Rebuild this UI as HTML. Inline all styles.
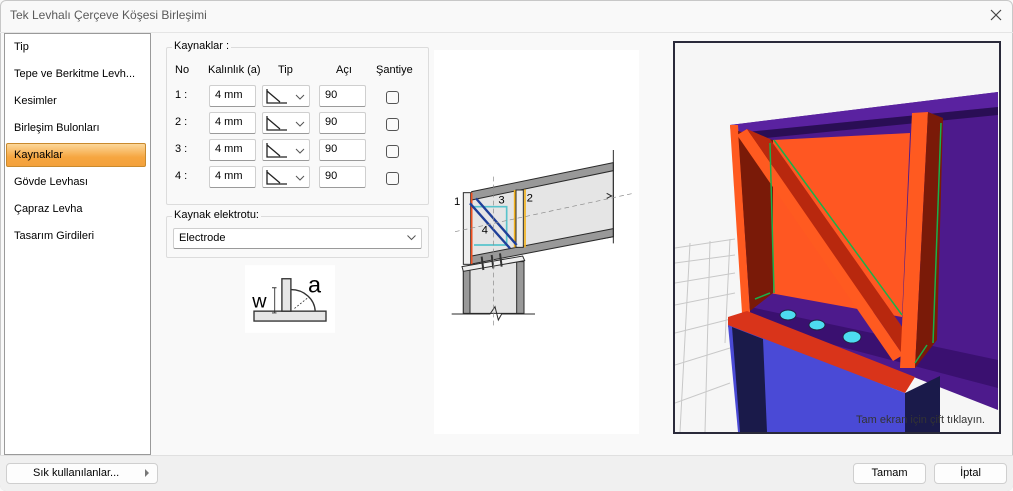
<!DOCTYPE html>
<html><head><meta charset="utf-8"><style>
*{margin:0;padding:0;box-sizing:border-box}
body{width:1013px;height:491px;background:#f9f9f9;font-family:"Segoe UI","Liberation Sans",sans-serif;font-size:11px;color:#000;position:relative;overflow:hidden}
.a{position:absolute}
.win{left:0;top:0;width:1013px;height:491px;border:1px solid #c8c8c8;border-radius:6px;background:#f9f9f9}
.title{left:10px;top:8px;font-size:12px;color:#5a5a5a}
.list{left:4px;top:33px;width:147px;height:422px;background:#fff;border:1px solid #9a9a9a}
.item{position:absolute;left:10px;font-size:11px}
.sel{left:6px;top:143px;width:140px;height:24px;background:linear-gradient(#fcd79a,#f6a640 60%,#f3a13c);border:1px solid #c98a2e;border-radius:2px}
.fs{border:1px solid #dcdcdc;border-radius:2px}
.leg{background:#f9f9f9;padding:0 2px;font-size:11px}
.inp{position:absolute;background:#fff;border:1px solid #cfcfcf;border-bottom-color:#9a9a9a;border-radius:2px;height:22px;font-size:11px;padding:3px 0 0 5px}
.cb{position:absolute;width:13px;height:13px;border:1px solid #555;border-radius:3px;background:#fafafa}
.btn{position:absolute;background:#fdfdfd;border:1px solid #cfcfcf;border-radius:4px;height:21px;font-size:11px;text-align:center;padding-top:3px}
</style></head><body>
<div class="a win"></div>
<div class="a title">Tek Levhalı Çerçeve Köşesi Birleşimi</div>
<svg class="a" style="left:990px;top:9px" width="12" height="12"><path d="M1 1L11 11M11 1L1 11" stroke="#444" stroke-width="1.2"/></svg>
<div class="a" style="left:0;top:32px;width:1013px;height:1px;background:#e5e5e5"></div>

<div class="a list"></div>
<div class="a sel"></div>
<div class="a" style="left:4px;top:33px;width:147px;height:422px">
<div class="item" style="top:8px">Tip</div>
<div class="item" style="top:35px">Tepe ve Berkitme Levh...</div>
<div class="item" style="top:62px">Kesimler</div>
<div class="item" style="top:89px">Birleşim Bulonları</div>
<div class="item" style="top:116px">Kaynaklar</div>
<div class="item" style="top:143px">Gövde Levhası</div>
<div class="item" style="top:170px">Çapraz Levha</div>
<div class="item" style="top:197px">Tasarım Girdileri</div>
</div>

<div class="a fs" style="left:166px;top:47px;width:263px;height:158px"></div>
<div class="a leg" style="left:172px;top:40px">Kaynaklar :</div>
<div class="a" style="left:175px;top:64px">No</div>
<div class="a" style="left:208px;top:64px">Kalınlık (a)</div>
<div class="a" style="left:278px;top:64px">Tip</div>
<div class="a" style="left:336px;top:64px">Açı</div>
<div class="a" style="left:376px;top:64px">Şantiye</div>
<div id="rows"></div>

<div class="a fs" style="left:166px;top:216px;width:263px;height:42px"></div>
<div class="a leg" style="left:172px;top:209px">Kaynak elektrotu:</div>
<div class="inp" style="left:173px;top:228px;width:249px;height:21px">Electrode</div>
<svg class="a" style="left:407px;top:235px" width="9" height="6"><path d="M0.5 0.5L4.5 4.5L8.5 0.5" stroke="#555" fill="none"/></svg>

<svg class="a" style="left:245px;top:264px" width="90" height="70" viewBox="0 0 100 75">
<rect width="100" height="75" fill="#fff"/>
<rect x="10" y="51" width="80" height="11" fill="#e6e6e6" stroke="#333" stroke-width="1.5"/>
<rect x="41" y="15" width="10" height="36" fill="#e6e6e6" stroke="#333" stroke-width="1.5"/>
<path d="M51 27A27 25 0 0 1 78 51" stroke="#333" fill="none" stroke-width="1.5"/>
<path d="M51 27L51 51" stroke="#333" stroke-width="1"/>
<path d="M55 48L70 36" stroke="#333" stroke-dasharray="2 2"/>
<path d="M33 25L33 53M30 25h5M30 53h5" stroke="#333"/>
<text x="8" y="47" font-size="22" font-family="Liberation Sans">w</text>
<text x="70" y="30" font-size="26" font-family="Liberation Sans">a</text>
</svg>

<div class="a" style="left:434px;top:50px;width:205px;height:384px;background:#fff"></div>
<svg class="a" style="left:430px;top:40px" width="230" height="300" viewBox="0 0 690 900">
<g stroke="#2a2a2a" stroke-width="3">
<path d="M125 465L550 375L550 590L125 665Z" fill="#e5e5e5"/>
<path d="M125 455L550 368L550 392L125 480Z" fill="#999"/>
<path d="M125 648L550 566L550 590L125 672Z" fill="#999"/>
<path d="M100 690L280 660L280 820L100 820Z" fill="#e5e5e5"/>
<path d="M100 690h20v130h-20zM260 665h22v155h-22z" fill="#999"/>
<path d="M96 680L278 648L284 662L100 694Z" fill="#eee"/>
<rect x="100" y="458" width="22" height="215" fill="#eee"/>
<rect x="258" y="450" width="22" height="172" fill="#eee"/>
<path d="M550 330V610M65 822H180L195 800L205 840L215 822H315" fill="none"/>
<path d="M530 460L545 468L530 475" fill="none"/>
</g>
<path d="M125 458V672" stroke="#f05020" stroke-width="5"/>
<path d="M254 450V622M285 448V622" stroke="#f2b320" stroke-width="5"/>
<path d="M132 500H230V615H132" stroke="#58c3cc" stroke-width="5" fill="none"/>
<path d="M120 490L240 625M138 475L260 615" stroke="#1f3f99" stroke-width="7"/>
<path d="M155 650L160 690M185 645L190 685M210 640L215 680" stroke="#333" stroke-width="6"/>
<path d="M190 410V860M75 575L610 460" stroke="#888" stroke-dasharray="14 10" stroke-width="2"/>
<text x="72" y="495" font-size="34" font-family="Liberation Sans">1</text>
<text x="290" y="485" font-size="34" font-family="Liberation Sans">2</text>
<text x="205" y="490" font-size="34" font-family="Liberation Sans">3</text>
<text x="155" y="580" font-size="34" font-family="Liberation Sans">4</text>
</svg>

<div class="a" style="left:673px;top:41px;width:328px;height:393px;background:#f6f6f6;border:2px solid #2a2a3a;overflow:hidden">
<svg width="324" height="389" viewBox="0 0 324 389">
<g stroke="#c8c8c8" stroke-width="1" fill="none">
<path d="M0 205L60 196M0 220L60 212M0 240L60 230M0 262L60 250M0 290L60 275M0 322L55 305M0 360L55 340"/>
<path d="M15 200L5 389M35 198L30 389M55 196L50 300"/>
</g>
<path d="M55 82L323 49V367L75 270Z" fill="#4d1a8c"/>
<path d="M55 82L323 49V64L62 90Z" fill="#5a22a0"/>
<path d="M62 90L323 64V72L70 97Z" fill="#2a0e55"/>
<path d="M75 264L323 317V345L75 280Z" fill="#3a1070"/>
<path d="M98 97L235 90L227 274L95 250Z" fill="#ff5722"/>
<path d="M55 82L63 82L75 270L67 270Z" fill="#ff5a20"/>
<path d="M63 88L98 97L98 250L75 268Z" fill="#7a1a08"/>
<path d="M62 92L72 86L228 312L218 318Z" fill="#ff5a20"/>
<path d="M72 86L95 96L230 288L228 312Z" fill="#b8280e"/>
<path d="M237 70L253 69L240 325L225 325Z" fill="#ff5a20"/>
<path d="M253 69L268 75L262 297L240 325Z" fill="#7a1a08"/>
<path d="M53 274L72 268L240 334L230 350L53 284Z" fill="#d9341a"/>
<path d="M53 282L230 350L230 389L63 389Z" fill="#4a4ad6"/>
<path d="M57 284L88 296L92 389L65 389Z" fill="#1a1a4a"/>
<path d="M230 350L265 333L265 389L230 389Z" fill="#1a1a4a"/>
<g fill="#4ddcf0" stroke="#224"><ellipse cx="113" cy="272" rx="8" ry="5"/><ellipse cx="142" cy="282" rx="8" ry="5"/><ellipse cx="177" cy="294" rx="9" ry="6"/></g>
<path d="M95 100L99 250M99 97L227 272M266 80L258 300M80 256L95 250M240 320L252 302" stroke="#1ab04a" stroke-width="1.5" fill="none"/>
</svg>
<div class="a" style="right:14px;bottom:6px;font-size:11px;color:#333">Tam ekran için çift tıklayın.</div>
</div>

<div class="a" style="left:0;top:455px;width:1013px;height:36px;background:#f0f0f0;border-top:1px solid #e0e0e0;border-radius:0 0 6px 6px"></div>
<div class="btn" style="left:6px;top:463px;width:152px;text-align:left;padding-left:26px">Sık kullanılanlar...</div>
<svg class="a" style="left:145px;top:469px" width="5" height="8"><path d="M0 0L4 4L0 8Z" fill="#777"/></svg>
<div class="btn" style="left:853px;top:463px;width:73px">Tamam</div>
<div class="btn" style="left:934px;top:463px;width:73px">İptal</div>

<script>
var h='';for(var i=0;i<4;i++){var y=85+i*27;
h+='<div class="a" style="left:175px;top:'+(y+4)+'px">'+(i+1)+' :</div>'+
'<div class="inp" style="left:209px;top:'+y+'px;width:47px">4 mm</div>'+
'<div class="inp" style="left:262px;top:'+y+'px;width:48px;padding:0"><svg width="46" height="20"><path d="M4 3V17H24M4 5L17 16" stroke="#222" stroke-width="1.3" fill="none"/><path d="M33 9L37 13L41 9" stroke="#555" fill="none"/></svg></div>'+
'<div class="inp" style="left:319px;top:'+y+'px;width:47px">90</div>'+
'<div class="cb" style="left:386px;top:'+(y+6)+'px"></div>';}
document.getElementById('rows').innerHTML=h;
</script>
</body></html>
